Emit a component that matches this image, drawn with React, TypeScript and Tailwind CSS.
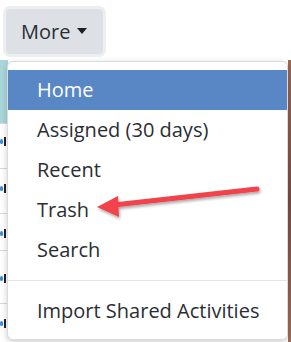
export default function App() {
  const items = ["Home", "Assigned (30 days)", "Recent", "Trash", "Search"];
  const rowLines = [123, 168, 213, 250, 303];
  const frags = [143, 190, 235, 280, 325];

  return (
    <div
      className="relative w-[291px] h-[342px] overflow-hidden bg-white"
      style={{ fontFamily: '"Open Sans", "Liberation Sans", sans-serif' }}
    >
      {/* Page behind the menu */}
      <div className="flex flex-col h-full">
        <div className="h-[60px] pl-[6px] pt-[9px]">
          <button className="flex items-center gap-[7px] w-[97px] h-[45px] pl-[15px] rounded-[4px] bg-[#dde1e6] ring-[3px] ring-[#eceef1] text-[20px] text-[#2a2f34]">
            More
            <span className="w-0 h-0 border-x-[5.5px] border-x-transparent border-t-[6px] border-t-[#1c1f23] mt-[-1px]" />
          </button>
        </div>
        <div className="flex flex-1">
          <div className="relative w-[8px]">
            <div className="h-[63px] bg-[#a9d6da]" />
            {rowLines.map((y) => (
              <div
                key={y}
                className="absolute left-0 w-full h-px bg-[#d6d9dc]"
                style={{ top: y - 60 }}
              />
            ))}
            {frags.map((y) => (
              <div key={y} className="absolute left-0 flex items-center gap-[1px]" style={{ top: y - 66 }}>
                <span className="w-[3px] h-[5px] rounded-full bg-[#3a8fd8]" />
                <span className="w-[2px] h-[9px] bg-[#222]" />
              </div>
            ))}
          </div>
          <div className="flex-1" />
          <div className="w-[3px] bg-gradient-to-b from-[#9a6a55] via-[#7a4a48] to-[#a06e5c]" />
        </div>
      </div>

      {/* Dropdown menu */}
      <div className="absolute left-[7px] top-[61px] w-[281px] h-[279px] bg-white border border-[#d9dcdf] rounded-[6px] shadow-[0_2px_6px_rgba(0,0,0,0.2)] py-[8px] text-[20px] text-[#2a2e33]">
        {items.map((label, i) => (
          <div
            key={label}
            className={
              i === 0
                ? "h-[40px] flex items-center pl-[29px] bg-[#5987c5] text-white"
                : "h-[40px] flex items-center pl-[29px]"
            }
          >
            {label}
          </div>
        ))}
        <div className="my-[10px] h-px bg-[#e4e6e8]" />
        <div className="h-[40px] flex items-center pl-[29px]">Import Shared Activities</div>
      </div>

      {/* Annotation arrow */}
      <svg className="absolute left-0 top-0" width="291" height="342" viewBox="0 0 291 342">
        <defs>
          <filter id="sh" x="-20%" y="-50%" width="140%" height="200%">
            <feDropShadow dx="1" dy="2" stdDeviation="1.5" floodColor="#000" floodOpacity="0.35" />
          </filter>
        </defs>
        <g filter="url(#sh)">
          <line x1="257" y1="189" x2="114" y2="205" stroke="#f2424b" strokeWidth="5" strokeLinecap="round" />
          <polygon points="97,207 118,196 119,217" fill="#f2424b" />
        </g>
      </svg>
    </div>
  );
}
